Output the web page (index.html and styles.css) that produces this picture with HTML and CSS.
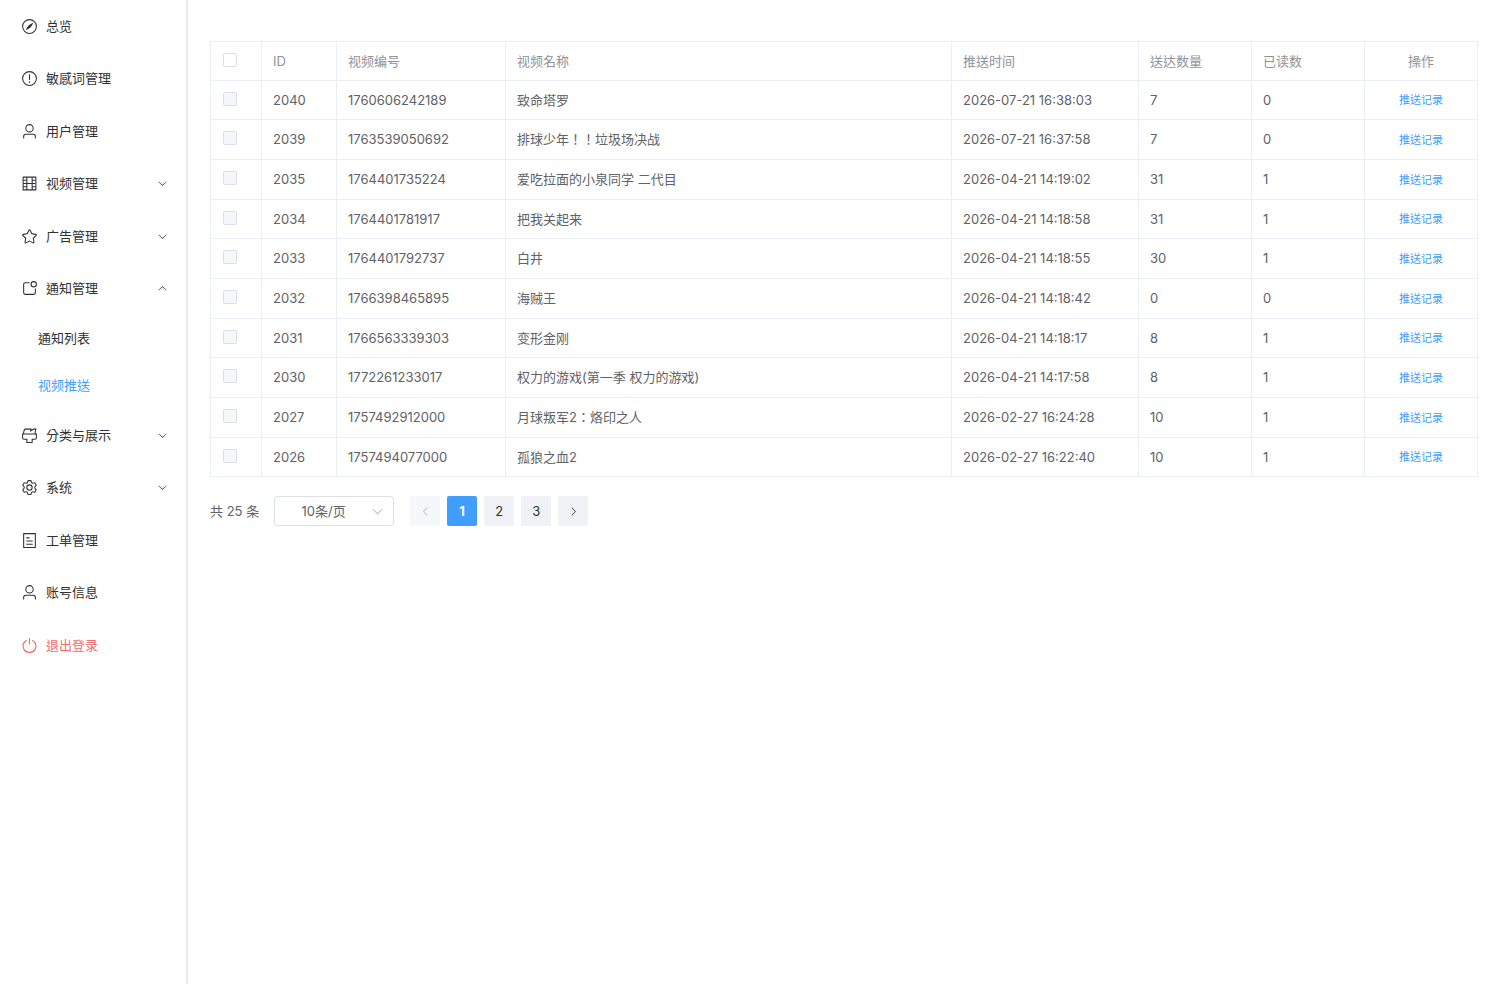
FILE: index.html
```html
<!DOCTYPE html>
<html lang="zh-Hant">
<head>
  <meta charset="UTF-8" />
  <meta name="viewport" content="width=device-width, initial-scale=1.0" />
  <title>视频推送</title>
  <link rel="stylesheet" href="styles.css">
</head>
<body>
<!-- Shared icons -->
<svg class="sprite" aria-hidden="true">
  <symbol id="arrow" viewBox="0 0 1024 1024"><path d="M831.872 340.864 512 652.672 192.128 340.864a30.592 30.592 0 0 0-42.752 0 29.12 29.12 0 0 0 0 41.6L489.664 714.24a32 32 0 0 0 44.672 0l340.288-331.712a29.12 29.12 0 0 0 0-41.728 30.592 30.592 0 0 0-42.752 0z"/></symbol>
  <symbol id="user" viewBox="0 0 1024 1024"><path d="M512 512a192 192 0 1 0 0-384 192 192 0 0 0 0 384m0 64a256 256 0 1 1 0-512 256 256 0 0 1 0 512m320 320v-96a96 96 0 0 0-96-96H288a96 96 0 0 0-96 96v96a32 32 0 1 1-64 0v-96a160 160 0 0 1 160-160h448a160 160 0 0 1 160 160v96a32 32 0 1 1-64 0"/></symbol>
</svg>

<div class="layout">
  <nav class="sidebar">
    <ul class="menu">
      <li><a class="menu-item" href="#">
        <svg class="icon" viewBox="0 0 1024 1024"><path d="M512 896a384 384 0 1 0 0-768 384 384 0 0 0 0 768m0 64a448 448 0 1 1 0-896 448 448 0 0 1 0 896"/><path d="M725.888 315.008C676.48 428.672 624 513.28 568.576 568.64c-55.424 55.424-139.968 107.904-253.568 157.312a12.8 12.8 0 0 1-16.896-16.832c49.536-113.728 102.016-198.272 157.312-253.632 55.36-55.296 139.904-107.776 253.632-157.312a12.8 12.8 0 0 1 16.832 16.832"/></svg>
        <span>总览</span></a></li>
      <li><a class="menu-item" href="#">
        <svg class="icon" viewBox="0 0 1024 1024"><path d="M512 64a448 448 0 1 1 0 896 448 448 0 0 1 0-896m0 832a384 384 0 0 0 0-768 384 384 0 0 0 0 768m48-176a48 48 0 1 1-96 0 48 48 0 0 1 96 0m-48-464a32 32 0 0 1 32 32v288a32 32 0 0 1-64 0V288a32 32 0 0 1 32-32"/></svg>
        <span>敏感词管理</span></a></li>
      <li><a class="menu-item" href="#">
        <svg class="icon"><use href="#user"/></svg>
        <span>用户管理</span></a></li>
      <li><a class="menu-item" href="#">
        <svg class="icon" viewBox="0 0 1024 1024"><path d="M160 160v704h704V160zm-32-64h768a32 32 0 0 1 32 32v768a32 32 0 0 1-32 32H128a32 32 0 0 1-32-32V128a32 32 0 0 1 32-32"/><path d="M320 288V128h64v352h256V128h64v160h160v64H704v128h160v64H704v128h160v64H704v160h-64V544H384v352h-64V736H128v-64h192V544H128v-64h192V352H128v-64z"/></svg>
        <span>视频管理</span><svg class="arrow"><use href="#arrow"/></svg></a></li>
      <li><a class="menu-item" href="#">
        <svg class="icon" viewBox="0 0 1024 1024"><path d="m512 747.84 228.16 119.936a6.4 6.4 0 0 0 9.28-6.72l-43.52-254.08 184.512-179.904a6.4 6.4 0 0 0-3.52-10.88l-255.104-37.12L517.76 147.904a6.4 6.4 0 0 0-11.52 0L392.192 379.072l-255.104 37.12a6.4 6.4 0 0 0-3.52 10.88L318.08 606.976l-43.584 254.08a6.4 6.4 0 0 0 9.28 6.72zM313.6 924.48a70.4 70.4 0 0 1-102.144-74.24l37.888-220.928L88.96 472.96A70.4 70.4 0 0 1 128 352.896l221.76-32.256 99.2-200.96a70.4 70.4 0 0 1 126.208 0l99.2 200.96 221.824 32.256a70.4 70.4 0 0 1 39.04 120.064L774.72 629.376l37.888 220.928a70.4 70.4 0 0 1-102.144 74.24L512 820.096l-198.4 104.32z"/></svg>
        <span>广告管理</span><svg class="arrow"><use href="#arrow"/></svg></a></li>
      <li><a class="menu-item" href="#">
        <svg class="icon" viewBox="0 0 1024 1024"><path d="M512 128v64H256a64 64 0 0 0-64 64v512a64 64 0 0 0 64 64h512a64 64 0 0 0 64-64V512h64v256a128 128 0 0 1-128 128H256a128 128 0 0 1-128-128V256a128 128 0 0 1 128-128z"/><path d="M768 384a128 128 0 1 0 0-256 128 128 0 0 0 0 256m0 64a192 192 0 1 1 0-384 192 192 0 0 1 0 384"/></svg>
        <span>通知管理</span><svg class="arrow open"><use href="#arrow"/></svg></a>
        <ul class="submenu">
          <li><a class="sub-item" href="#">通知列表</a></li>
          <li><a class="sub-item active" href="#">视频推送</a></li>
        </ul>
      </li>
      <li><a class="menu-item" href="#">
        <svg class="icon" viewBox="0 0 1024 1024"><path d="M896 448H128v192a64 64 0 0 0 64 64h192v192h256V704h192a64 64 0 0 0 64-64zm-770.752-64c0-47.552 5.248-90.24 15.552-128 14.72-54.016 42.496-107.392 83.2-160h417.28l-15.36 70.336L736 96h211.2c-24.832 42.88-41.92 96.256-51.2 160a663.872 663.872 0 0 0-6.144 128H960v256a128 128 0 0 1-128 128H704v160a32 32 0 0 1-32 32H352a32 32 0 0 1-32-32V768H192A128 128 0 0 1 64 640V384h61.248zm64 0h636.544c-2.048-45.824.256-91.584 6.848-137.216 4.48-30.848 10.688-59.776 18.688-86.784h-96.64l-221.12 141.248L561.92 160H256.512c-25.856 37.888-43.776 75.456-53.952 112.832-8.768 32.064-13.248 69.12-13.312 111.168z"/></svg>
        <span>分类与展示</span><svg class="arrow"><use href="#arrow"/></svg></a></li>
      <li><a class="menu-item" href="#">
        <svg class="icon" viewBox="0 0 1024 1024"><path d="M600.704 64a32 32 0 0 1 30.464 22.208l35.2 109.376c14.784 7.232 28.928 15.36 42.432 24.512l112.384-24.192a32 32 0 0 1 34.432 15.36L944.32 364.8a32 32 0 0 1-4.032 37.504l-77.12 85.12a357.12 357.12 0 0 1 0 49.024l77.12 85.248a32 32 0 0 1 4.032 37.504l-88.704 153.6a32 32 0 0 1-34.432 15.296L708.8 803.904c-13.44 9.088-27.648 17.28-42.368 24.512l-35.264 109.376A32 32 0 0 1 600.704 960H423.296a32 32 0 0 1-30.464-22.208L357.696 828.48a351.616 351.616 0 0 1-42.56-24.64l-112.32 24.256a32 32 0 0 1-34.432-15.36L79.68 659.2a32 32 0 0 1 4.032-37.504l77.12-85.248a357.12 357.12 0 0 1 0-48.896l-77.12-85.248A32 32 0 0 1 79.68 364.8l88.704-153.6a32 32 0 0 1 34.432-15.296l112.32 24.256c13.568-9.152 27.776-17.408 42.56-24.64l35.2-109.312A32 32 0 0 1 423.232 64H600.64zm-23.424 64H446.72l-36.352 113.088-24.512 11.968a294.113 294.113 0 0 0-34.816 20.096l-22.656 15.36-116.224-25.088-65.28 113.152 79.68 88.192-1.92 27.136a293.12 293.12 0 0 0 0 40.192l1.92 27.136-79.808 88.192 65.344 113.152 116.224-25.024 22.656 15.296a294.113 294.113 0 0 0 34.816 20.096l24.512 11.968L446.72 896h130.688l36.48-113.152 24.448-11.904a288.282 288.282 0 0 0 34.752-20.096l22.592-15.296 116.288 25.024 65.28-113.152-79.744-88.192 1.92-27.136a293.12 293.12 0 0 0 0-40.256l-1.92-27.136 79.808-88.128-65.344-113.152-116.288 24.96-22.592-15.232a287.616 287.616 0 0 0-34.752-20.096l-24.448-11.904L577.344 128zM512 320a192 192 0 1 1 0 384 192 192 0 0 1 0-384m0 64a128 128 0 1 0 0 256 128 128 0 0 0 0-256"/></svg>
        <span>系统</span><svg class="arrow"><use href="#arrow"/></svg></a></li>
      <li><a class="menu-item" href="#">
        <svg class="icon" viewBox="0 0 1024 1024"><path d="M192 128v768h640V128zm-32-64h704a32 32 0 0 1 32 32v832a32 32 0 0 1-32 32H160a32 32 0 0 1-32-32V96a32 32 0 0 1 32-32m160 448h384v64H320zm0-192h192v64H320zm0 384h384v64H320z"/></svg>
        <span>工单管理</span></a></li>
      <li><a class="menu-item" href="#">
        <svg class="icon"><use href="#user"/></svg>
        <span>账号信息</span></a></li>
      <li><a class="menu-item logout" href="#">
        <svg class="icon" viewBox="0 0 1024 1024"><path d="M352 159.872V230.4a352 352 0 1 0 320 0v-70.528A416.128 416.128 0 0 1 512 960a416 416 0 0 1-160-800.128"/><path d="M512 64q32 0 32 32v320q0 32-32 32t-32-32V96q0-32 32-32"/></svg>
        <span>退出登录</span></a></li>
    </ul>
  </nav>

  <main class="content">
    <table class="table">
      <colgroup>
        <col class="col-check"><col class="col-id"><col class="col-no"><col>
        <col class="col-time"><col class="col-num"><col class="col-num"><col class="col-num">
      </colgroup>
      <thead>
        <tr>
          <th><input type="checkbox" aria-label="全选"></th>
          <th>ID</th><th>视频编号</th><th>视频名称</th><th>推送时间</th><th>送达数量</th><th>已读数</th><th class="center">操作</th>
        </tr>
      </thead>
      <tbody>
        <tr><td><input type="checkbox" aria-label="2040" disabled></td><td>2040</td><td>1760606242189</td><td>致命塔罗</td><td>2026-07-21 16:38:03</td><td>7</td><td>0</td><td class="center"><button class="link">推送记录</button></td></tr>
        <tr><td><input type="checkbox" aria-label="2039" disabled></td><td>2039</td><td>1763539050692</td><td>排球少年！！垃圾场决战</td><td>2026-07-21 16:37:58</td><td>7</td><td>0</td><td class="center"><button class="link">推送记录</button></td></tr>
        <tr><td><input type="checkbox" aria-label="2035" disabled></td><td>2035</td><td>1764401735224</td><td>爱吃拉面的小泉同学 二代目</td><td>2026-04-21 14:19:02</td><td>31</td><td>1</td><td class="center"><button class="link">推送记录</button></td></tr>
        <tr><td><input type="checkbox" aria-label="2034" disabled></td><td>2034</td><td>1764401781917</td><td>把我关起来</td><td>2026-04-21 14:18:58</td><td>31</td><td>1</td><td class="center"><button class="link">推送记录</button></td></tr>
        <tr><td><input type="checkbox" aria-label="2033" disabled></td><td>2033</td><td>1764401792737</td><td>白井</td><td>2026-04-21 14:18:55</td><td>30</td><td>1</td><td class="center"><button class="link">推送记录</button></td></tr>
        <tr><td><input type="checkbox" aria-label="2032" disabled></td><td>2032</td><td>1766398465895</td><td>海贼王</td><td>2026-04-21 14:18:42</td><td>0</td><td>0</td><td class="center"><button class="link">推送记录</button></td></tr>
        <tr><td><input type="checkbox" aria-label="2031" disabled></td><td>2031</td><td>1766563339303</td><td>变形金刚</td><td>2026-04-21 14:18:17</td><td>8</td><td>1</td><td class="center"><button class="link">推送记录</button></td></tr>
        <tr><td><input type="checkbox" aria-label="2030" disabled></td><td>2030</td><td>1772261233017</td><td>权力的游戏(第一季 权力的游戏)</td><td>2026-04-21 14:17:58</td><td>8</td><td>1</td><td class="center"><button class="link">推送记录</button></td></tr>
        <tr><td><input type="checkbox" aria-label="2027" disabled></td><td>2027</td><td>1757492912000</td><td>月球叛军2：烙印之人</td><td>2026-02-27 16:24:28</td><td>10</td><td>1</td><td class="center"><button class="link">推送记录</button></td></tr>
        <tr><td><input type="checkbox" aria-label="2026" disabled></td><td>2026</td><td>1757494077000</td><td>孤狼之血2</td><td>2026-02-27 16:22:40</td><td>10</td><td>1</td><td class="center"><button class="link">推送记录</button></td></tr>
      </tbody>
    </table>

    <div class="pagination">
      <span class="total">共 25 条</span>
      <div class="select">
        <select aria-label="每页条数"><option>10条/页</option></select>
        <svg class="select-arrow"><use href="#arrow"/></svg>
      </div>
      <div class="pager">
        <button aria-label="上一页" disabled><svg class="prev"><use href="#arrow"/></svg></button>
        <button class="current">1</button>
        <button>2</button>
        <button>3</button>
        <button aria-label="下一页"><svg class="next"><use href="#arrow"/></svg></button>
      </div>
    </div>
  </main>
</div>
</body>
</html>
```
FILE: styles.css
```css
* {
  box-sizing: border-box;
}

body {
  margin: 0;
  font-family: Inter, "Noto Sans CJK TC", sans-serif;
  font-size: 13px;
  color: #606266;
  background: #fff;
}

button,
select {
  font: inherit;
}

svg {
  fill: currentColor;
  flex: none;
}

.sprite {
  display: none;
}

.layout {
  display: flex;
  min-height: 100vh;
}

/* Sidebar */
.sidebar {
  width: 188px;
  flex: none;
  border-right: 2px solid #ebebeb;
}

.menu,
.submenu {
  list-style: none;
  margin: 0;
  padding: 0;
}

.menu-item {
  display: flex;
  align-items: center;
  height: 53px;
  padding: 0 18px 0 21px;
  color: #303133;
  text-decoration: none;
}

.menu > li:nth-child(odd) > .menu-item {
  height: 52px;
}

.menu-item span {
  padding-bottom: 2px;
}

.icon {
  width: 17px;
  height: 17px;
  margin-right: 8px;
}

.arrow {
  width: 11px;
  height: 11px;
  margin-left: auto;
}

.open {
  transform: rotate(180deg);
}

.sub-item {
  display: flex;
  align-items: center;
  height: 47px;
  padding: 0 0 2px 38px;
  color: #303133;
  text-decoration: none;
}

.sub-item.active {
  color: #409eff;
}

.menu-item.logout {
  color: #f56c6c;
}

/* Table */
.content {
  flex: 1;
  min-width: 0;
  padding: 41px 22px 22px;
}

.table {
  width: 100%;
  table-layout: fixed;
  border-collapse: collapse;
}

.col-check {
  width: 51px;
}

.col-id {
  width: 75px;
}

.col-no {
  width: 169px;
}

.col-time {
  width: 187px;
}

.col-num {
  width: 113px;
}

th,
td {
  height: 40px;
  padding: 0 11px 1px;
  border: 1px solid #ebeef5;
  text-align: left;
  line-height: 22px;
}

th {
  height: 39px;
  font-weight: 400;
  color: #909399;
}

tbody tr:nth-child(3n + 1) td {
  height: 39px;
}

.center {
  text-align: center;
}

input[type="checkbox"] {
  appearance: none;
  display: block;
  width: 14px;
  height: 14px;
  margin: 0 0 2px 1px;
  border: 1px solid #dcdfe6;
  border-radius: 2px;
  background: #fff;
}

input[type="checkbox"]:disabled {
  background: #f5f7fa;
}

.link {
  padding: 0;
  border: none;
  background: none;
  color: #409eff;
  font-size: 11px;
  cursor: pointer;
}

/* Pagination */
.pagination {
  display: flex;
  align-items: center;
  margin-top: 19px;
}

.total {
  padding-bottom: 2px;
}

.select {
  display: grid;
  align-items: center;
  width: 120px;
  margin: 0 16px 0 15px;
}

.select select,
.select-arrow {
  grid-area: 1 / 1;
}

.select select {
  appearance: none;
  height: 30px;
  padding: 0 32px 1px 11px;
  border: 1px solid #dcdfe6;
  border-radius: 4px;
  background: #fff;
  color: #606266;
  text-align: center;
  text-align-last: center;
}

.select-arrow {
  justify-self: end;
  width: 13px;
  height: 13px;
  margin-right: 10px;
  color: #a8abb2;
  pointer-events: none;
}

.pager {
  display: flex;
  gap: 7px;
}

.pager button {
  display: flex;
  align-items: center;
  justify-content: center;
  width: 30px;
  height: 30px;
  padding: 0;
  border: none;
  border-radius: 2px;
  background: #f0f2f5;
  color: #303133;
  cursor: pointer;
}

.pager button.current {
  background: #409eff;
  color: #fff;
  font-weight: 700;
}

.pager button:disabled {
  background: #f5f7fa;
  color: #a8abb2;
}

.pager svg {
  width: 11px;
  height: 11px;
}

.prev {
  transform: rotate(90deg);
}

.next {
  transform: rotate(-90deg);
}
```
